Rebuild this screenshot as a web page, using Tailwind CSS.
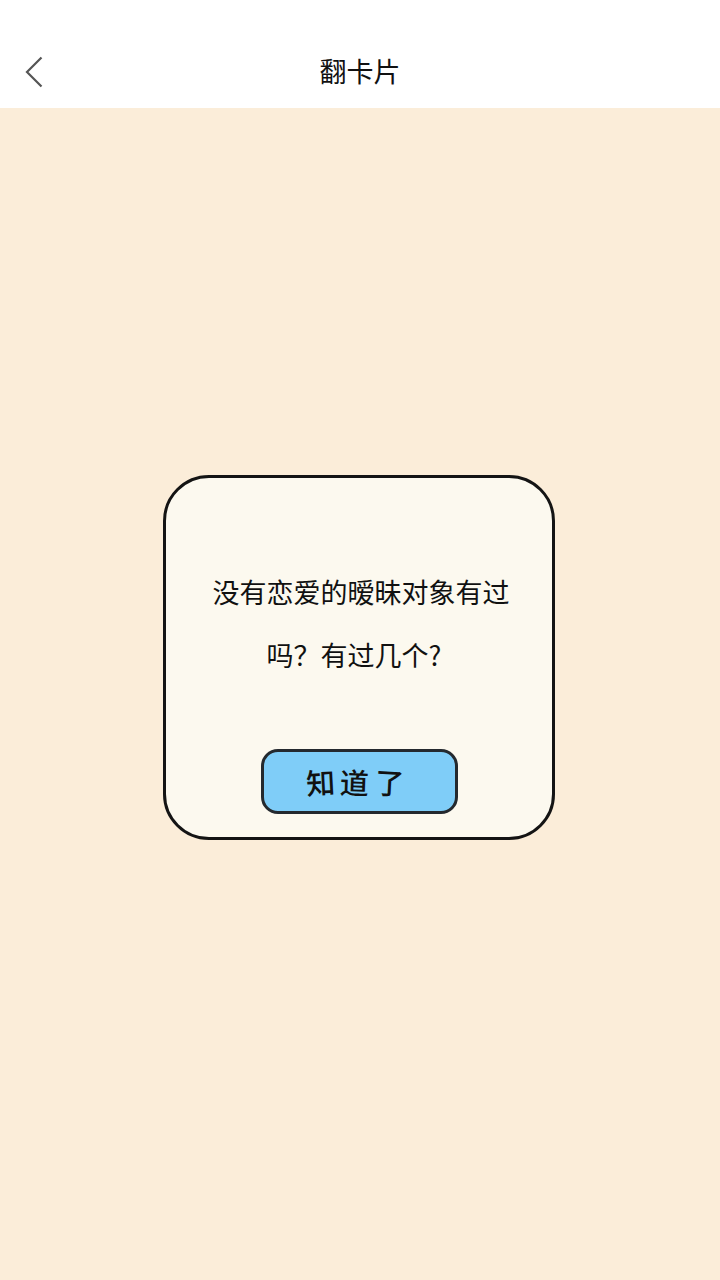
<!DOCTYPE html>
<html lang="zh-CN">
<head>
  <meta charset="UTF-8" />
  <meta name="viewport" content="width=device-width, initial-scale=1.0" />
  <title>翻卡片</title>
  <script src="https://cdn.jsdelivr.net/npm/@tailwindcss/browser@4"></script>
</head>
<body class="w-[720px] h-[1280px] overflow-hidden flex flex-col bg-[#fbedd9] font-['Noto_Sans_CJK_SC','Noto_Sans',sans-serif]">

  <!-- Header -->
  <header class="h-[108px] bg-white flex items-center pt-[36px] relative shrink-0">
    <button class="ml-[24px] w-[20px] h-[32px] flex items-center">
      <svg width="20" height="32" viewBox="0 0 20 32" fill="none" stroke="#555555" stroke-width="2.2">
        <path d="M17.5 1.5 L3 16 L17.5 30.5" />
      </svg>
    </button>
    <h1 class="absolute left-0 right-0 top-[35px] h-[72px] flex items-center justify-center text-[27px] text-[#111111]">翻卡片</h1>
  </header>

  <!-- Card -->
  <main class="flex-1 pt-[367px] pl-[163px]">
    <div class="w-[392px] h-[365px] bg-[#fcf9ef] border-[3px] border-[#141414] rounded-[46px] flex flex-col items-center pt-[82px]">
      <p class="w-[320px] text-center text-[27px] leading-[63px] text-[#111111]">
        <span class="block pl-[4px]">没有恋爱的暧昧对象有过</span>
        <span class="block pr-[10px]">吗？有过几个?</span>
      </p>
      <button class="mt-[63px] ml-[1px] w-[197px] h-[65px] bg-[#7fcdf8] border-[3.5px] border-[#24292e] rounded-[17px] flex items-center justify-center gap-[5px] pr-[9px] text-[29px] font-medium text-[#111111]">
        <span class="-rotate-3">知</span><span class="rotate-2">道</span><span class="rotate-3">了</span>
      </button>
    </div>
  </main>

</body>
</html>
